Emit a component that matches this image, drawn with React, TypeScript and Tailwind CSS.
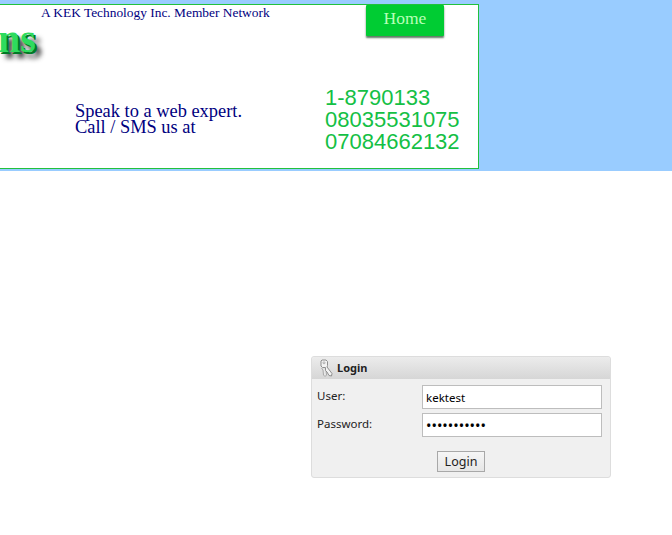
const serif = "font-['Liberation_Serif',serif]";
const tahoma = "font-['Noto_Sans',sans-serif]";

function KeyIcon() {
  return (
    <svg width="14" height="18" viewBox="0 0 14 18" fill="none" className="shrink-0">
      <path d="M2.5 9l1.5 2 .5 5 1.5 1.5 1.5-1.5-.5-5" fill="#e8e8e8" stroke="#a8a8a8" strokeWidth="1" />
      <path d="M3 1h4l1.5 1.5v4l-.5 1.5 5 6.5-.5 2.5-2.5-.5-2-3.5-1.5-1.5v-3h-3l-1.5-1.5v-5z" fill="#f2f2f2" stroke="#8f8f8f" strokeWidth="1" />
      <circle cx="5" cy="3.8" r="1" fill="#ffffff" stroke="#999999" strokeWidth="0.8" />
    </svg>
  );
}

function Header() {
  return (
    <div className="bg-[#99ccff] h-[171px] pt-1 text-[#000080]">
      <div className="relative w-[479px] h-[165px] bg-white border border-l-0 border-[#22c13c] overflow-hidden">
        <div className="flex items-start">
          <p className={`${serif} text-[13.4px] leading-4 pl-[41px] w-[366px]`}>
            A KEK Technology Inc. Member Network
          </p>
          <div className={`${serif} w-[78px] h-[31px] bg-[#00cc33] rounded-[1px] text-[#b8ffb8] text-[17.5px] leading-[27px] text-center shadow-[0_2px_2px_#5c7a63]`}>
            Home
          </div>
        </div>
        <span className={`${serif} absolute left-[-2px] top-[14px] text-[40px] leading-10 font-bold text-[#2edb5e] [text-shadow:2px_2px_0_#007a25,6px_6px_5px_#333333]`}>
          ns
        </span>
        <div className="flex mt-[49px]">
          <p className={`${serif} text-[18.4px] leading-4 pl-[75px] pt-[18px] w-[325px]`}>
            Speak to a web expert.
            <br />
            Call / SMS us at
          </p>
          <p className="font-['Liberation_Sans',sans-serif] text-[22px] leading-[22px] text-[#14c045] pt-[2px]">
            1-8790133
            <br />
            08035531075
            <br />
            07084662132
          </p>
        </div>
      </div>
    </div>
  );
}

function LoginBox() {
  return (
    <div className={`${tahoma} ml-[311px] mt-[185px] w-[300px] h-[122px] border border-[#dddddd] rounded-[3px] bg-[#f0f0f0] text-[11.5px] text-[#222222]`}>
      <div className="flex items-center gap-1 h-[22px] pl-[7px] bg-gradient-to-b from-[#ececec] to-[#d6d6d6] rounded-t-[3px]">
        <KeyIcon />
        <span className="text-[11px] font-bold">Login</span>
      </div>
      <div className="flex flex-col gap-1 pl-[5px] pt-[6px]">
        <div className="flex">
          <label className="w-[105px] leading-[22px]">User:</label>
          <input
            readOnly
            value="kektest"
            className="w-[180px] h-6 px-[3px] bg-white border border-[#bdbdbd] text-[11.5px] text-black outline-none"
          />
        </div>
        <div className="flex">
          <label className="w-[105px] leading-[22px]">Password:</label>
          <input
            readOnly
            type="password"
            value="kektest1234"
            className="w-[180px] h-6 px-[3px] bg-white border border-[#bdbdbd] text-[14.5px] text-black outline-none"
          />
        </div>
      </div>
      <div className="flex pl-[125px] pt-[14px]">
        <button className="w-12 h-[21px] bg-gradient-to-b from-[#f6f6f6] to-[#e6e6e6] border border-[#a8a8a8] text-[12.5px] leading-[18px] text-[#222222]">
          Login
        </button>
      </div>
    </div>
  );
}

export default function App() {
  return (
    <div className="w-[672px] h-[535px] bg-white overflow-hidden">
      <Header />
      <LoginBox />
    </div>
  );
}
